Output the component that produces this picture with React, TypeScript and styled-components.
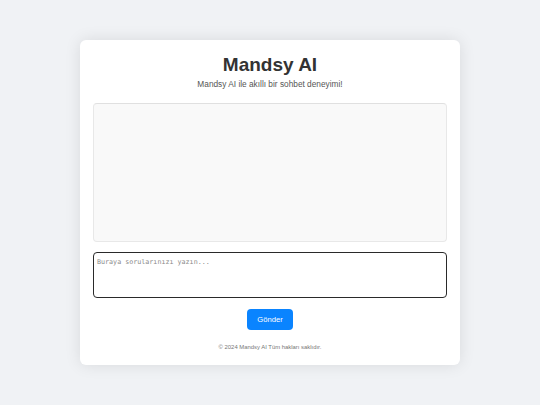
import React from 'react';
import styled, { createGlobalStyle } from 'styled-components';

const GlobalStyle = createGlobalStyle`
  html, body {
    margin: 0;
    padding: 0;
    background: #f0f2f5;
    font-family: 'Liberation Sans', Arial, sans-serif;
  }
`;

const Page = styled.div`
  width: 540px;
  height: 405px;
  display: flex;
  justify-content: center;
  padding-top: 40px;
  box-sizing: border-box;
`;

const Card = styled.main`
  width: 380px;
  height: 325px;
  box-sizing: border-box;
  padding: 13px;
  background: #fff;
  border-radius: 6px;
  box-shadow: 0 0 16px rgba(0, 0, 0, 0.1);
  display: flex;
  flex-direction: column;
  align-items: center;
`;

const Title = styled.h1`
  margin: 1px 0 0;
  font-size: 19px;
  line-height: 22px;
  font-weight: 700;
  color: #333;
`;

const Subtitle = styled.p`
  margin: 2px 0 0;
  font-size: 8.3px;
  line-height: 12px;
  color: #555;
`;

const ChatBox = styled.div`
  margin-top: 13px;
  width: 100%;
  height: 139px;
  box-sizing: border-box;
  background: #f9f9f9;
  border: 1px solid #e8e8e8;
  border-top-color: #e0e0e0;
  border-radius: 4px;
`;

const Input = styled.textarea`
  margin-top: 10px;
  width: 100%;
  height: 46px;
  box-sizing: border-box;
  padding: 4px 3px;
  border: 1.5px solid #2a2a2a;
  border-radius: 4px;
  outline: none;
  resize: none;
  font-family: 'DejaVu Sans Mono', monospace;
  font-size: 6.7px;
  line-height: 10px;
  color: #333;
  &::placeholder {
    color: #8a8a8a;
  }
`;

const SendButton = styled.button`
  margin-top: 11px;
  height: 21px;
  padding: 0 10px;
  border: none;
  border-radius: 4px;
  background: #0a84ff;
  color: #fff;
  font-family: 'Liberation Sans', Arial, sans-serif;
  font-size: 7.6px;
  cursor: pointer;
`;

const Footer = styled.footer`
  margin-top: 13px;
  font-size: 5.9px;
  line-height: 8px;
  color: #777;
`;

export default function App() {
  return (
    <>
      <GlobalStyle />
      <Page>
        <Card>
          <Title>Mandsy AI</Title>
          <Subtitle>Mandsy AI ile akıllı bir sohbet deneyimi!</Subtitle>
          <ChatBox />
          <Input autoFocus placeholder="Buraya sorularınızı yazın..." />
          <SendButton>Gönder</SendButton>
          <Footer>© 2024 Mandsy AI Tüm hakları saklıdır.</Footer>
        </Card>
      </Page>
    </>
  );
}
